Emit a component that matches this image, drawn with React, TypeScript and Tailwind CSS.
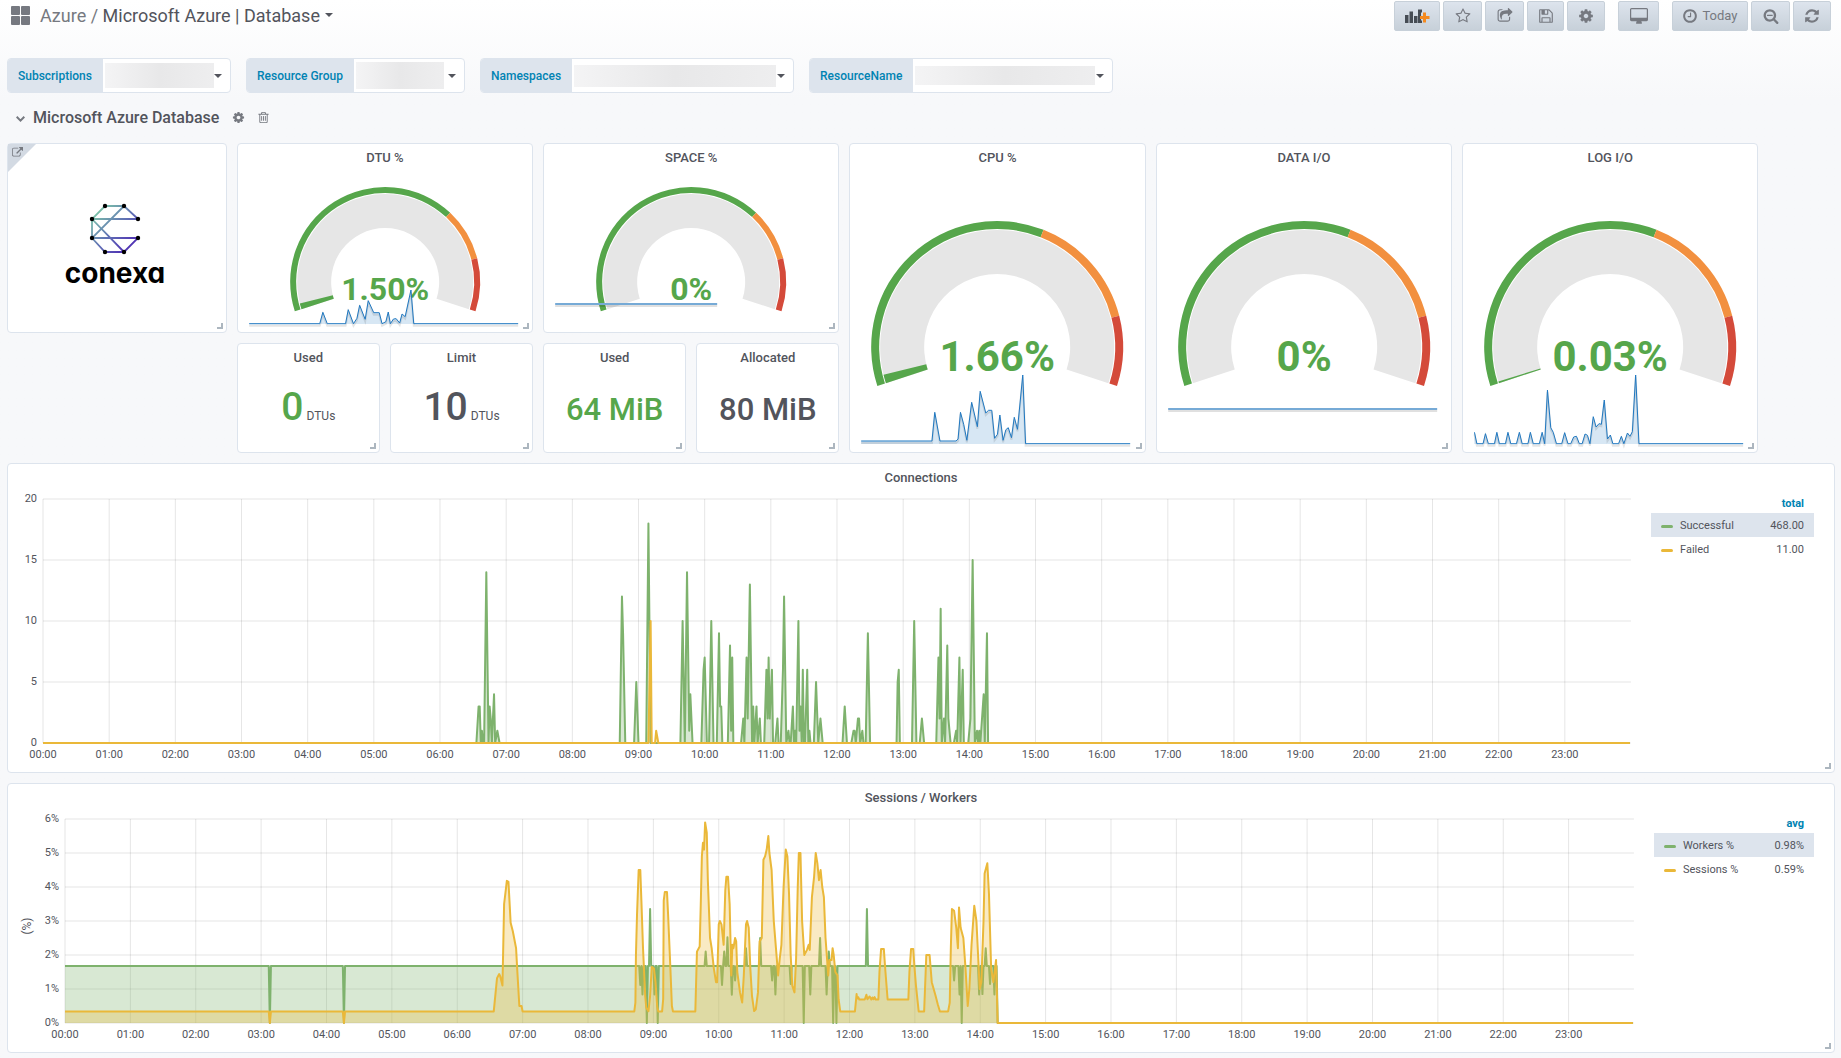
import type { ReactNode } from "react";

type Point = [number, number];

const GREEN = "#56a64b";
const ORANGE = "#f2903f";
const RED = "#d44a3a";
const SERIES_GREEN = "#7eb26d";
const SERIES_YELLOW = "#eab839";

const ICONS = {
  star: "M1201 1004l306-297-422-62-189-382-189 382-422 62 306 297-73 421 378-199 377 199zm527-357q0 22-26 48l-363 354 86 500q1 7 1 20 0 50-41 50-19 0-40-12l-449-236-449 236q-22 12-40 12-21 0-31.5-14.5t-10.5-35.5q0-6 2-20l86-500-364-354q-25-27-25-48 0-37 56-46l502-73 225-455q19-41 49-41t49 41l225 455 502 73q56 9 56 46z",
  share: "M1472 989v259q0 119-84.5 203.5t-203.5 84.5h-832q-119 0-203.5-84.5t-84.5-203.5v-832q0-119 84.5-203.5t203.5-84.5h255q13 0 22.5 9.5t9.5 22.5q0 27-26 32-77 26-133 60-10 4-16 4h-112q-66 0-113 47t-47 113v832q0 66 47 113t113 47h832q66 0 113-47t47-113v-214q0-19 18-29 28-13 54-37 16-16 35-8 21 9 21 29zm237-496l-384 384q-18 19-45 19-12 0-25-5-39-17-39-59v-192h-160q-323 0-438 131-119 137-74 473 3 23-20 34-8 2-12 2-16 0-26-13-10-14-21-31t-39.5-68.5-49.5-99.5-38.5-114-17.5-122q0-49 3.5-91t14-90 28-88 47-81.5 68.5-74 94.5-61.5 124.5-48.5 159.5-30.5 196.5-11h160v-192q0-42 39-59 13-5 25-5 26 0 45 19l384 384q19 19 19 45t-19 45z",
  save: "M512 1536h768v-384h-768v384zm896 0h128v-896q0-14-10-38.5t-20-34.5l-281-281q-10-10-34-20t-39-10v416q0 40-28 68t-68 28h-576q-40 0-68-28t-28-68v-416h-128v1280h128v-416q0-40 28-68t68-28h832q40 0 68 28t28 68v416zm-384-928v-320q0-13-9.5-22.5t-22.5-9.5h-192q-13 0-22.5 9.5t-9.5 22.5v320q0 13 9.5 22.5t22.5 9.5h192q13 0 22.5-9.5t9.5-22.5zm640 32v928q0 40-28 68t-68 28h-1344q-40 0-68-28t-28-68v-1344q0-40 28-68t68-28h928q40 0 88 20t76 48l280 280q28 28 48 76t20 88z",
  cog: "M1152 896q0-106-75-181t-181-75-181 75-75 181 75 181 181 75 181-75 75-181zm512-109v222q0 12-8 23t-20 13l-185 28q-19 54-39 91 35 50 107 138 10 12 10 25t-9 23q-27 37-99 108t-94 71q-12 0-26-9l-138-108q-44 23-91 38-16 136-29 186-7 28-36 28h-222q-14 0-24.5-8.5t-11.5-21.5l-28-184q-49-16-90-37l-141 107q-10 9-25 9-14 0-25-11-126-114-165-168-7-10-7-23 0-12 8-23 15-21 51-66.5t54-70.5q-27-50-41-99l-183-27q-13-2-21-12.5t-8-23.5v-222q0-12 8-23t19-13l186-28q14-46 39-92-40-57-107-138-10-12-10-24 0-10 9-23 26-36 98.5-107.5t94.5-71.5q13 0 26 10l138 107q44-23 91-38 16-136 29-186 7-28 36-28h222q14 0 24.5 8.5t11.5 21.5l28 184q49 16 90 37l142-107q9-9 24-9 13 0 25 10 129 119 165 170 7 8 7 22 0 12-8 23-15 21-51 66.5t-54 70.5q26 50 41 98l183 28q13 2 21 12.5t8 23.5z",
  desktop: "M1728 992v-832q0-13-9.5-22.5t-22.5-9.5h-1600q-13 0-22.5 9.5t-9.5 22.5v832q0 13 9.5 22.5t22.5 9.5h1600q13 0 22.5-9.5t9.5-22.5zm128-832v1088q0 66-47 113t-113 47h-544q0 37 16 77.5t32 71 16 43.5q0 26-19 45t-45 19h-512q-26 0-45-19t-19-45q0-14 16-44t32-70 16-78h-544q-66 0-113-47t-47-113v-1088q0-66 47-113t113-47h1600q66 0 113 47t47 113z",
  clock: "M1024 544v448q0 14-9 23t-23 9h-320q-14 0-23-9t-9-23v-64q0-14 9-23t23-9h224v-352q0-14 9-23t23-9h64q14 0 23 9t9 23zm416 352q0-148-73-273t-198-198-273-73-273 73-198 198-73 273 73 273 198 198 273 73 273-73 198-198 73-273zm224 0q0 209-103 385.5t-279.5 279.5-385.5 103-385.5-103-279.5-279.5-103-385.5 103-385.5 279.5-279.5 385.5-103 385.5 103 279.5 279.5 103 385.5z",
  zoomOut: "M1088 800v64q0 13-9.5 22.5t-22.5 9.5h-576q-13 0-22.5-9.5t-9.5-22.5v-64q0-13 9.5-22.5t22.5-9.5h576q13 0 22.5 9.5t9.5 22.5zm128 32q0-185-131.5-316.5t-316.5-131.5-316.5 131.5-131.5 316.5 131.5 316.5 316.5 131.5 316.5-131.5 131.5-316.5zm512 832q0 53-37.5 90.5t-90.5 37.5q-54 0-90-38l-343-342q-179 124-399 124-143 0-273.5-55.5t-225-150-150-225-55.5-273.5 55.5-273.5 150-225 225-150 273.5-55.5 273.5 55.5 225 150 150 225 55.5 273.5q0 220-124 399l343 343q37 37 37 90z",
  refresh: "M1639 1056q0 5-1 7-64 268-268 434.5t-478 166.5q-146 0-282.5-55t-243.5-157l-129 129q-19 19-45 19t-45-19-19-45v-448q0-26 19-45t45-19h448q26 0 45 19t19 45-19 45l-137 137q71 66 161 102t187 36q134 0 250-65t186-179q11-17 53-117 8-23 30-23h192q13 0 22.5 9.5t9.5 22.5zm25-800v448q0 26-19 45t-45 19h-448q-26 0-45-19t-19-45 19-45l138-138q-148-137-349-137-134 0-250 65t-186 179q-11 17-53 117-8 23-30 23h-199q-13 0-22.5-9.5t-9.5-22.5v-7q65-268 270-434.5t480-166.5q146 0 284 55.5t245 156.5l130-129q19-19 45-19t45 19 19 45z",
  trash: "M704 736v576q0 14-9 23t-23 9h-64q-14 0-23-9t-9-23v-576q0-14 9-23t23-9h64q14 0 23 9t9 23zm256 0v576q0 14-9 23t-23 9h-64q-14 0-23-9t-9-23v-576q0-14 9-23t23-9h64q14 0 23 9t9 23zm256 0v576q0 14-9 23t-23 9h-64q-14 0-23-9t-9-23v-576q0-14 9-23t23-9h64q14 0 23 9t9 23zm128 724v-948h-896v948q0 22 7 40.5t14.5 27 10.5 8.5h832q3 0 10.5-8.5t14.5-27 7-40.5zm-672-1076h448l-48-117q-7-9-17-11h-317q-10 2-17 11zm928 32v64q0 14-9 23t-23 9h-96v948q0 83-47 143.5t-113 60.5h-832q-66 0-113-58.5t-47-141.5v-952h-96q-14 0-23-9t-9-23v-64q0-14 9-23t23-9h309l70-167q15-37 54-63t79-26h320q40 0 79 26t54 63l70 167h309q14 0 23 9t9 23z",
  external: "M1408 928v320q0 119-84.5 203.5t-203.5 84.5h-832q-119 0-203.5-84.5t-84.5-203.5v-832q0-119 84.5-203.5t203.5-84.5h704q14 0 23 9t9 23v64q0 14-9 23t-23 9h-704q-66 0-113 47t-47 113v832q0 66 47 113t113 47h832q66 0 113-47t47-113v-320q0-14 9-23t23-9h64q14 0 23 9t9 23zm384-864v512q0 26-19 45t-45 19-45-19l-176-176-652 652q-10 10-23 10t-23-10l-114-114q-10-10-10-23t10-23l652-652-176-176q-19-19-19-45t19-45 45-19h512q26 0 45 19t19 45z",
};

function Icon({ name, className }: { name: keyof typeof ICONS; className: string }) {
  const viewBox = name === "desktop" ? "-64 0 1920 1792" : "0 0 1792 1792";
  return (
    <svg viewBox={viewBox} className={className} fill="currentColor" aria-hidden="true">
      <path d={ICONS[name]} />
    </svg>
  );
}

function AddPanelIcon() {
  return (
    <svg viewBox="0 0 25 14" className="w-[25px] h-[14px]" aria-hidden="true">
      <path fill="#464c54" d="M0 6h3.5v8H0zM4.500 2.500H8V14H4.500zM9 7h3.500v7H9zM13 0.500h4v3h-1v8h1V14h-4z" />
      <path fill="#f58a1f" d="M18 3.500h3v3.500h3.500v3H21v3.500h-3V10h-3V7h3z" />
    </svg>
  );
}

function ToolbarButton({ label, className, children }: { label: string; className: string; children: ReactNode }) {
  return (
    <button
      type="button"
      aria-label={label}
      className={`h-[30px] flex items-center justify-center rounded-xs border border-[#c7d0d9] bg-linear-to-b from-[#dde4ed] to-[#c7d0d9] text-[#767980] ${className}`}
    >
      {children}
    </button>
  );
}

function Caret() {
  return <span className="w-0 h-0 border-x-4 border-t-4 border-x-transparent border-t-[#52545c]" />;
}

function Variable({ id, label, width, block }: { id: string; label: string; width: string; block: string }) {
  return (
    <div className={`h-[35px] flex rounded-sm border border-[#dde4ed] bg-white overflow-hidden ${width}`}>
      <label htmlFor={id} className="flex items-center pl-[10px] pr-[11px] bg-[#dde4ed] text-[12px] font-medium text-[#0083b3] whitespace-nowrap">
        {label}
      </label>
      <div className="relative flex-1">
        <select id={id} className="absolute inset-0 w-full h-full appearance-none bg-transparent" />
        <div className="relative h-full flex items-center justify-between pl-[2px] pr-2 pointer-events-none">
          <span className={`flex-1 bg-linear-to-r from-[#f4f4f5] via-[#e8e8e9] to-[#eeeeef] ${block}`} />
          <Caret />
        </div>
      </div>
    </div>
  );
}

function Panel({ title, className, children }: { title?: string; className: string; children: ReactNode }) {
  return (
    <section className={`relative flex flex-col rounded-sm border border-[#dde4ed] bg-white ${className}`}>
      {title && (
        <h2 className="h-7 shrink-0 flex items-center justify-center text-[13px] font-medium text-[#52545c]">{title}</h2>
      )}
      {children}
      <span className="absolute right-[3px] bottom-[3px] w-[6px] h-[6px] border-r-2 border-b-2 border-[#acb6bf]" />
    </section>
  );
}

// Gauges run from 162 degrees on the left, over the top, to 18 degrees below the right end.
function arc(cx: number, cy: number, outer: number, inner: number, from: number, to: number) {
  const at = (r: number, f: number) => {
    const a = Math.PI * (0.9 + 1.2 * f);
    return `${(cx + r * Math.cos(a)).toFixed(2)} ${(cy + r * Math.sin(a)).toFixed(2)}`;
  };
  const large = to - from > 1 / 1.2 ? 1 : 0;
  return `M${at(outer, from)}A${outer} ${outer} 0 ${large} 1 ${at(outer, to)}L${at(inner, to)}A${inner} ${inner} 0 ${large} 0 ${at(inner, from)}Z`;
}

type GaugeProps = {
  text: string;
  value: number;
  warn: number;
  small?: boolean;
  spark?: string;
  flat?: { y: number; to: number };
};

function Gauge({ text, value, warn, small, spark, flat }: GaugeProps) {
  const height = small ? 190 : 310;
  const cy = small ? 139 : 204;
  const [r1, r2, r3, r4] = small ? [95, 89, 88, 54] : [126, 118, 117, 73];
  const base = height - 9;
  return (
    <svg viewBox={`0 0 296 ${height}`} className="absolute -inset-px w-[calc(100%+2px)] h-[calc(100%+2px)]" role="img" aria-label={text}>
      <path d={arc(148, cy, r3, r4, 0, 1)} fill="#e6e6e6" />
      {value > 0 && <path d={arc(148, cy, r3, r4, 0, value)} fill={GREEN} />}
      <path d={arc(148, cy, r1, r2, 0, warn)} fill={GREEN} />
      <path d={arc(148, cy, r1, r2, warn, 0.85)} fill={ORANGE} />
      <path d={arc(148, cy, r1, r2, 0.85, 1)} fill={RED} />
      <text
        x="148"
        y={small ? 157 : 228}
        textAnchor="middle"
        fill={GREEN}
        className={small ? "font-bold text-[32px]" : "font-bold text-[42px]"}
      >
        {text}
      </text>
      {spark && (
        <>
          <polygon points={`12,${base} ${spark} 281,${base}`} fill="#1f78c1" fillOpacity="0.18" />
          <polyline points={spark} transform="translate(0 2)" fill="none" stroke="#000" strokeOpacity="0.1" strokeWidth="2" />
          <polyline points={spark} fill="none" stroke="#1f78c1" />
        </>
      )}
      {flat && (
        <>
          <rect x="12" y={flat.y + 1} width={flat.to - 12} height="2" fill="#000" fillOpacity="0.12" />
          <rect x="12" y={flat.y - 1} width={flat.to - 12} height="2" fill="#76aad6" />
        </>
      )}
    </svg>
  );
}

const dtuSpark =
  "12,180.700 82.600,180.700 85.700,169.300 90.100,180.700 108.400,180.700 111.100,166.700 116.300,180.700 119.800,175.300 122.500,162.300 128,176.300 131.100,157.700 136.600,169.700 142.100,169.700 144.900,180.700 148.700,178.700 151.100,169 153.200,180.700 156.300,176 159,175.700 162.500,180 164.900,171 168,173.700 173.800,147 176.600,180.700 281,180.700";
const cpuSpark =
  "12,298 82.800,298 85.600,269.300 90.800,298 106.900,298 108.900,296 111.300,269.300 114.500,281.300 117.700,297.300 122.500,259.300 128.200,283.700 131,248.300 136.600,270 139.400,267.300 142.600,267.300 145.400,295.300 148.300,291.300 150.700,272 153.900,297.300 156.700,286.700 159.100,284.700 162.300,294.700 165.100,274.300 168.300,286.300 173.600,232 176.400,300.700 281,300.700";
const logSpark =
  "12.300,289.300 14.700,300.700 20.900,300.700 23.300,290.700 26.200,300.700 32.300,300.700 34.700,289.300 37.200,300.700 43.300,300.700 45.800,289.300 48.600,300.700 54.300,300.700 57.200,289.300 60,300.700 65.800,300.700 68.200,289.300 71.100,300.700 77.200,300.700 80,289.300 82.500,300.700 85.300,247 88.600,284.700 91.100,289.300 94.300,300.700 99.600,300.700 102.500,289.700 105.800,300.700 108.600,300.700 111.500,294 114.300,293.300 117.200,300.700 120,300.700 122.900,291 125.300,292.300 127.800,300.700 131.100,273.700 133.900,284 136.800,280.700 139.200,281.300 142.100,257 145.300,296 148.200,292 150.700,300.700 156.400,300.700 159.200,293.300 161.700,300.700 165.300,290 167.800,293.300 170.200,288.700 173.500,232 176.800,300.700 281,300.700";

// Series are [minute of the day, value].
const successful: Point[] = [
  [0, 0], [393, 0], [395, 3], [396, 3], [397, 0], [398, 1], [399, 0], [400, 0], [402, 14], [404, 0], [405, 3], [406, 2], [407, 0], [409, 4], [410, 0], [412, 1], [414, 0],
  [523, 0], [525, 12], [526, 9], [528, 0], [536, 0], [538, 5], [540, 0], [547, 0], [549, 18], [551, 0],
  [578, 0], [580, 10], [582, 0], [584, 14], [586, 1], [587, 4], [589, 0], [597, 0], [599, 6], [600, 7], [602, 0],
  [604, 0], [606, 10], [608, 0], [611, 0], [613, 9], [614, 3], [615, 3], [616, 0], [621, 0], [623, 8], [624, 1], [625, 7], [626, 0],
  [633, 0], [635, 2], [636, 0], [638, 7], [639, 2], [641, 13], [643, 0], [644, 3], [645, 0], [647, 3], [648, 0], [650, 2], [651, 0],
  [654, 0], [656, 6], [657, 2], [658, 7], [659, 2], [661, 6], [662, 0], [664, 0], [666, 2], [667, 0],
  [669, 0], [671, 6], [672, 12], [674, 0], [676, 1], [677, 0], [678, 0], [680, 3], [681, 0], [682, 1], [683, 0], [685, 10], [686, 1], [687, 3], [688, 0], [689, 6], [690, 0], [691, 0], [693, 6], [694, 0], [695, 1], [696, 0],
  [699, 0], [701, 5], [703, 0], [705, 2], [707, 0], [725, 0], [727, 3], [729, 0], [733, 0], [735, 1], [736, 1], [737, 0], [739, 2], [740, 2], [741, 0], [743, 1], [744, 0],
  [746, 0], [748, 9], [750, 0], [774, 0], [775, 5], [776, 6], [777, 0], [788, 0], [790, 10], [792, 0], [795, 0], [797, 2], [799, 0],
  [810, 0], [812, 7], [813, 2], [814, 11], [815, 0], [817, 2], [818, 0], [820, 8], [821, 2], [823, 0],
  [826, 0], [828, 1], [829, 0], [831, 7], [832, 0], [834, 6], [835, 0], [839, 0], [841, 2], [843, 15], [845, 0], [847, 1], [848, 0], [849, 1], [850, 0], [853, 4], [854, 0], [856, 9], [857, 0], [1439, 0],
];
const failed: Point[] = [[0, 0], [549, 0], [551, 10], [552, 0], [555, 0], [556, 1], [558, 0], [1439, 0]];

const workerExcursions: Point[] = [
  [188, 0], [256, 0], [528, 1.12], [530, 0.84], [534, 0], [537, 3.35], [541, 0.84], [544, 0], [588, 2.1], [603, 1.12], [605, 2.1], [608, 2.52], [612, 0.83], [615, 1.25],
  [625, 2.2], [638, 2.5], [649, 1.25], [652, 0.84], [666, 1.15], [678, 0], [684, 0.84], [693, 2.5], [699, 0.84], [701, 2.1],
  [705, 0], [708, 0], [736, 3.35], [816, 1.25], [821, 0.84], [823, 0], [839, 0.84], [842, 0.85], [845, 2.2], [849, 1.15], [853, 0.84],
];
const workers: Point[] = [
  [0, 1.68],
  ...workerExcursions.flatMap(([m, v]): Point[] => [[m - 1, 1.68], [m, v], [m + 1, 1.68]]),
  [855, 1.68], [856, 0], [1439, 0],
];
const sessions: Point[] = [
  [0, 0.34], [187, 0.34], [188, 0], [189, 0.34], [255, 0.34], [256, 0], [257, 0.34], [393.5, 0.34], [396.5, 1.32], [398.5, 1.44], [399.5, 1.37], [401.5, 1.1],
  [403, 3.5], [404.5, 3.9], [405.5, 4.18], [407, 4.15], [409, 2.95], [411, 2.7], [414, 2.2], [415, 1.6], [417, 0.5], [419, 0.5], [420, 0.34],
  [522.5, 0.34], [523.5, 0.6], [524, 2], [525, 3.2], [526.5, 4.5], [528, 4.5], [529, 3.6], [530.5, 2.2], [532.5, 0.8], [533.5, 0.45], [535.5, 0.35], [537, 0.8], [538.5, 1.65], [540.5, 1.6], [542, 1.2], [543.5, 0.5], [544.5, 0.34],
  [548, 0.34], [549, 0.7], [549.5, 3.6], [550.5, 3.85], [552.5, 3.85], [553.5, 3.2], [555.5, 1.7], [557, 0.5], [558, 0.34],
  [578.5, 0.34], [580, 2.1], [582.5, 2.25], [583.5, 3.5], [584.5, 4.9], [585.5, 5.3], [586.5, 5.1], [587.5, 5.9], [589, 5.6], [590, 4.2], [592, 2.5], [593.5, 2.2], [595.5, 1.6], [597.5, 1.2], [598.5, 1.2],
  [600, 2.9], [601, 3], [602.5, 2.9], [604.5, 2.3], [606, 3.9], [607, 4.3], [608.5, 4.3], [610, 3.5], [611.5, 1.4], [612.5, 2.3], [613.5, 2.2], [615, 2.5], [616, 2.4], [617, 1.5], [619.5, 0.9], [621.5, 0.6],
  [623, 1.4], [625, 2.9], [626, 3], [627.5, 2.8], [629, 1.6], [630.5, 0.8], [632.5, 0.35], [634, 0.4], [636, 0.9], [637.5, 2.4], [639.5, 2.5],
  [641, 4.8], [642.5, 4.9], [644, 5.1], [645.5, 5.5], [646.5, 5], [648.5, 4.5], [650.5, 3], [652.5, 2.2], [654.5, 1.4], [656, 1.9], [657.5, 2.3], [659.5, 4], [661.5, 5.1], [663, 4.9], [664.5, 3.8], [666, 2], [667.5, 1.1], [669.5, 0.9],
  [671, 1.9], [672.5, 4], [673.5, 5], [675, 5], [676.5, 3], [678.5, 2], [681, 2.15], [682.5, 2.3], [683.5, 2.15], [685.5, 3.7], [687.5, 4.3], [689, 5], [690.5, 4.7], [692, 4.2], [693.5, 4.5], [695, 4], [696.5, 3.7], [698, 2.5], [700.5, 1.4],
  [701.5, 1.85], [703.5, 1.85], [704.5, 2.2], [705.5, 2], [707, 1.5], [709, 1.4], [710, 0.7], [711.5, 0.34],
  [725, 0.34], [726.5, 0.85], [727, 0.72], [728, 0.76], [729, 0.69], [734, 0.69], [735.5, 0.83], [736.5, 0.7], [738.5, 0.78], [740, 0.69], [741, 0.75], [742, 0.7], [743, 0.76], [744, 0.69], [746.5, 0.69],
  [747.5, 1.5], [749, 2.18], [751.5, 2.18], [753, 1.5], [755, 0.69], [774, 0.69], [775, 1.5], [776.5, 2.18], [778.5, 2.18], [779.5, 1.7], [781, 1.1], [783.5, 0.34],
  [788.5, 0.34], [790.5, 2], [793.5, 2], [795.5, 1.2], [799, 0.8], [801, 0.55], [803, 0.34], [810.5, 0.34], [812, 0.6], [813, 2.2], [814, 3.35], [816, 3.3], [818, 2.8], [819.5, 2.2], [820.5, 3.4], [822, 2.8], [824.5, 2.5], [826.5, 1.6], [828.5, 0.5],
  [830, 1], [832, 2.3], [834.5, 3.45], [836.5, 3], [838, 2], [839.5, 1], [841, 1.2], [843, 3], [844, 4.4], [846.5, 4.7], [848, 3.8], [850, 1.6], [852, 1.2], [854.5, 1.85], [856, 0], [1439, 0],
];

type Series = { name: string; value: string; color: string; points: Point[] };

type TimeChartProps = {
  ticks: string[];
  max: number;
  series: Series[];
  stat: string;
  unit?: string;
  axisWidth: string;
  legendWidth: string;
};

const hours = Array.from({ length: 24 }, (_, h) => `${String(h).padStart(2, "0")}:00`);

function TimeChart({ ticks, max, series, stat, unit, axisWidth, legendWidth }: TimeChartProps) {
  const steps = ticks.length - 1;
  return (
    <div className="flex-1 min-h-0 flex pr-5 text-[11px] leading-none text-[#52545c]">
      <div className={`flex justify-end pt-[6px] pb-[30px] ${axisWidth}`}>
        {unit && (
          <div className="flex-1 flex items-center pt-3 pl-[10px] text-[12px]">
            <span className="-rotate-90">{unit}</span>
          </div>
        )}
        <div className="flex flex-col justify-between items-end pr-[6px]">
          {ticks.map((tick) => (
            <span key={tick} className="h-0 flex items-center">{tick}</span>
          ))}
        </div>
      </div>
      <div className="flex-1 flex flex-col pt-[7px]">
        <svg viewBox={`0 0 1440 ${max}`} preserveAspectRatio="none" className="flex-1 min-h-0 w-full overflow-visible">
          <g stroke="#000" strokeOpacity="0.1" shapeRendering="crispEdges">
            {ticks.map((tick, i) => (
              <line key={tick} x1="0" x2="1440" y1={(i * max) / steps} y2={(i * max) / steps} vectorEffect="non-scaling-stroke" />
            ))}
            {hours.map((hour, i) => (
              <line key={hour} x1={i * 60} x2={i * 60} y1="0" y2={max} vectorEffect="non-scaling-stroke" />
            ))}
          </g>
          {series.map(({ name, color, points }) => {
            const line = points.map(([m, v]) => `${m},${max - v}`).join(" ");
            return (
              <g key={name}>
                <polygon points={`0,${max} ${line} 1439,${max}`} fill={color} fillOpacity="0.3" />
                <polyline points={line} fill="none" stroke={color} strokeWidth="2" strokeLinejoin="round" vectorEffect="non-scaling-stroke" />
              </g>
            );
          })}
        </svg>
        <div className="h-[29px] grid grid-cols-24 pt-[6px]">
          {hours.map((hour) => (
            <span key={hour} className="w-0 flex justify-center">{hour}</span>
          ))}
        </div>
      </div>
      <div className="pt-px pl-5">
        <table className={`border-collapse ${legendWidth}`}>
          <thead>
            <tr className="h-5">
              <td />
              <th scope="col" className="pr-[10px] text-right font-bold text-[#0083b3]">{stat}</th>
            </tr>
          </thead>
          <tbody>
            {series.map(({ name, value, color }, i) => (
              <tr key={name} className={i === 0 ? "h-6 bg-[#dde4ed]" : "h-6"}>
                <td className="pl-[10px]">
                  <span className="flex items-center gap-[7px]">
                    <span className="w-3 h-[3px] mt-[2px] rounded-full" style={{ backgroundColor: color }} />
                    {name}
                  </span>
                </td>
                <td className="pr-[10px] text-right">{value}</td>
              </tr>
            ))}
          </tbody>
        </table>
      </div>
    </div>
  );
}

function Stat({ title, value, unit, green }: { title: string; value: string; unit?: string; green?: boolean }) {
  return (
    <Panel title={title} className="col-span-2 row-span-3">
      <div className={`flex-1 flex items-baseline justify-center font-medium ${green ? "text-[#56a64b]" : "text-[#52545c]"}`}>
        <span className={unit ? "text-[39px] leading-[70px]" : "text-[31px] leading-[76px]"}>{value}</span>
        {unit && <span className="ml-[3px] text-[12px] font-normal text-[#52545c]">{unit}</span>}
      </div>
    </Panel>
  );
}

function Logo() {
  const dots: Point[] = [[15, 3], [34, 3], [2, 16], [48, 16], [2, 35], [48, 35], [15, 49], [34, 49]];
  return (
    <svg viewBox="0 0 112 90" className="w-28 h-[90px]" role="img" aria-label="conexa">
      <defs>
        <linearGradient id="logo" x1="0" y1="0" x2="50" y2="50" gradientUnits="userSpaceOnUse">
          <stop offset="0.1" stopColor="#7fd0a6" />
          <stop offset="0.5" stopColor="#6174b4" />
          <stop offset="0.8" stopColor="#5136b4" />
        </linearGradient>
      </defs>
      <g transform="translate(31 0)">
        <path
          d="M48 16 34 3H15L2 16V35L15 49H34L48 35H2L34 3M48 16.010H2L34 49"
          fill="none"
          stroke="url(#logo)"
          strokeWidth="1.800"
        />
        {dots.map(([x, y]) => (
          <circle key={`${x}-${y}`} cx={x} cy={y} r="2.200" />
        ))}
      </g>
      <text x="56" y="80" textAnchor="middle" className="font-[Inter,sans-serif] font-bold text-[28px] [font-feature-settings:'cv11']">
        conexa
      </text>
    </svg>
  );
}

export default function App() {
  return (
    <main className="min-h-screen bg-[#f7f8fa] bg-linear-to-b from-white to-[#f7f8fa] to-[100px] font-[Roboto,sans-serif] text-[#52545c] overflow-hidden">
      <header className="h-[31px] flex items-center justify-between pt-px pl-[11px] pr-[10px]">
        <h1 className="flex items-center pb-[2px] text-[18px]">
          <svg viewBox="0 0 19 19" className="w-[19px] h-[19px] mr-[10px]" fill="#767980" aria-hidden="true">
            <rect width="9" height="9" rx="1" />
            <rect x="10" width="9" height="9" rx="1" />
            <rect y="10" width="9" height="9" rx="1" />
            <rect x="10" y="10" width="9" height="9" rx="1" />
          </svg>
          <a href="#azure" className="text-[#767980] whitespace-pre">Azure / </a>
          <a href="#database" className="flex items-center gap-[5px]">
            Microsoft Azure | Database
            <Caret />
          </a>
        </h1>
        <div className="flex gap-[13px]">
          <div className="flex gap-[3px]">
            <ToolbarButton label="Add panel" className="w-[46px]"><AddPanelIcon /></ToolbarButton>
            <ToolbarButton label="Mark as favorite" className="w-[39px]"><Icon name="star" className="w-4 h-4" /></ToolbarButton>
            <ToolbarButton label="Share dashboard" className="w-[39px]"><Icon name="share" className="w-4 h-4" /></ToolbarButton>
            <ToolbarButton label="Save dashboard" className="w-[37px]"><Icon name="save" className="w-4 h-4" /></ToolbarButton>
            <ToolbarButton label="Dashboard settings" className="w-[38px]"><Icon name="cog" className="w-4 h-4" /></ToolbarButton>
          </div>
          <ToolbarButton label="Cycle view mode" className="w-[41px]"><Icon name="desktop" className="w-[18px] h-[17px]" /></ToolbarButton>
          <div className="flex gap-[3px]">
            <ToolbarButton label="Today" className="w-[76px] gap-1">
              <Icon name="clock" className="w-4 h-4" />
              <span className="text-[13px]">Today</span>
            </ToolbarButton>
            <ToolbarButton label="Zoom out" className="w-[39px]"><Icon name="zoomOut" className="w-4 h-4" /></ToolbarButton>
            <ToolbarButton label="Refresh" className="w-[38px]"><Icon name="refresh" className="w-4 h-4" /></ToolbarButton>
          </div>
        </div>
      </header>

      <nav className="flex gap-[15px] pt-[27px] px-[7px]">
        <Variable id="subscriptions" label="Subscriptions" width="w-[224px]" block="h-[25px]" />
        <Variable id="resource-group" label="Resource Group" width="w-[219px]" block="h-[27px] mr-1" />
        <Variable id="namespaces" label="Namespaces" width="w-[314px]" block="h-[22px] mr-px" />
        <Variable id="resource-name" label="ResourceName" width="w-[304px]" block="h-[19px] mr-px" />
      </nav>

      <div className="h-[50px] flex items-center pb-px pl-4">
        <svg viewBox="0 0 9 6" className="w-[9px] h-[6px] mt-[3px] mr-2" fill="none" stroke="#767980" strokeWidth="2" aria-hidden="true">
          <path d="M0.700 0.800 4.500 4.600 8.300 0.800" />
        </svg>
        <h2 className="text-[16px] font-medium">Microsoft Azure Database</h2>
        <button type="button" aria-label="Row options" className="ml-[13px] text-[#767980]"><Icon name="cog" className="w-[13px] h-[13px]" /></button>
        <button type="button" aria-label="Delete row" className="ml-3 text-[#767980]"><Icon name="trash" className="w-[13px] h-[13px]" /></button>
      </div>

      <div className="grid grid-cols-24 auto-rows-[30px] gap-[10px] pl-[7px] pr-[6px] pb-[5px]">
        <Panel className="col-span-3 row-span-5">
          <a href="#link" aria-label="Panel link" className="absolute left-0 top-0 w-7 h-7 bg-[#d3dae3] [clip-path:polygon(0_0,100%_0,0_100%)]">
            <Icon name="external" className="w-[11px] h-[11px] mt-[3px] ml-1 text-[#767980]" />
          </a>
          <div className="flex-1 flex items-center justify-center pt-5 pr-1">
            <Logo />
          </div>
        </Panel>
        <Panel title="DTU %" className="col-span-4 row-span-5">
          <Gauge small text="1.50%" value={0.018} warn={0.7} spark={dtuSpark} />
        </Panel>
        <Panel title="SPACE %" className="col-span-4 row-span-5">
          <Gauge small text="0%" value={0} warn={0.7} flat={{ y: 161, to: 174 }} />
        </Panel>
        <Panel title="CPU %" className="col-span-4 row-span-8">
          <Gauge text="1.66%" value={0.02} warn={0.6} spark={cpuSpark} />
        </Panel>
        <Panel title="DATA I/O" className="col-span-4 row-span-8">
          <Gauge text="0%" value={0} warn={0.6} flat={{ y: 266, to: 281 }} />
        </Panel>
        <Panel title="LOG I/O" className="col-span-4 row-span-8">
          <Gauge text="0.03%" value={0.004} warn={0.6} spark={logSpark} />
        </Panel>
        <div className="col-span-3 row-span-3" />
        <Stat title="Used" value="0" unit="DTUs" green />
        <Stat title="Limit" value="10" unit="DTUs" />
        <Stat title="Used" value="64 MiB" green />
        <Stat title="Allocated" value="80 MiB" />

        <Panel title="Connections" className="col-span-24 row-span-8">
          <TimeChart
            ticks={["20", "15", "10", "5", "0"]}
            max={20}
            stat="total"
            axisWidth="w-[35px]"
            legendWidth="w-[163px]"
            series={[
              { name: "Successful", value: "468.00", color: SERIES_GREEN, points: successful },
              { name: "Failed", value: "11.00", color: SERIES_YELLOW, points: failed },
            ]}
          />
        </Panel>
        <Panel title="Sessions / Workers" className="col-span-24 row-span-7">
          <TimeChart
            ticks={["6%", "5%", "4%", "3%", "2%", "1%", "0%"]}
            max={6}
            stat="avg"
            unit="(%)"
            axisWidth="w-[57px]"
            legendWidth="w-[160px]"
            series={[
              { name: "Workers %", value: "0.98%", color: SERIES_GREEN, points: workers },
              { name: "Sessions %", value: "0.59%", color: SERIES_YELLOW, points: sessions },
            ]}
          />
        </Panel>
      </div>
    </main>
  );
}
